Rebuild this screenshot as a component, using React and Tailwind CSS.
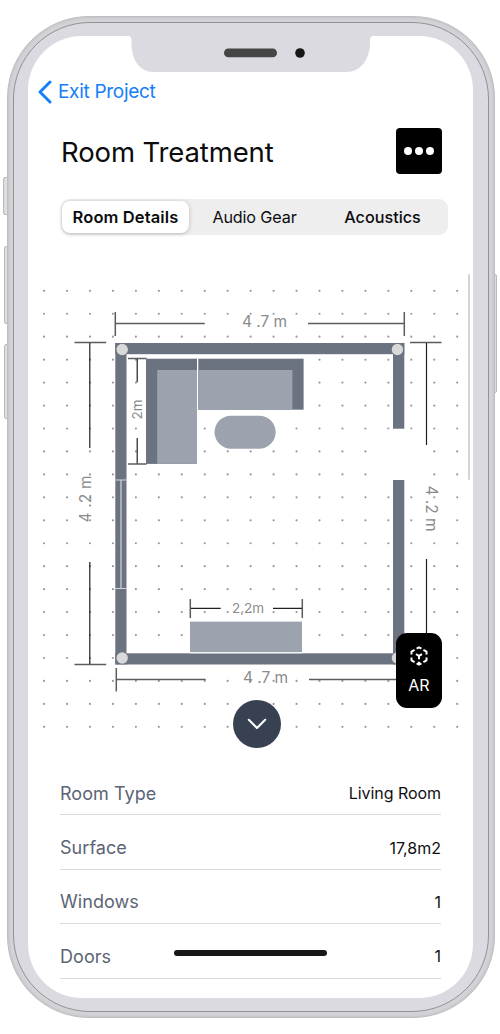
const columns = Array.from({ length: 19 }, (_, i) => 44.1 + i * 22.95);
const gridRows = Array.from({ length: 20 }, (_, i) => 290.8 + i * 22.95);

function FloorPlan() {
  return (
    <svg viewBox="28 280 445 460" className="block h-[460px] w-[445px]" aria-label="Floor plan">
      <g fill="#989a9e">
        {gridRows.map((y) =>
          columns.map((x) => <circle key={`${x}-${y}`} cx={x} cy={y} r="1.100" />)
        )}
      </g>
      <rect x="386" y="429.5" width="30" height="50" fill="#fff" />
      <path d="M127.5 354H393v4.500H127.500z" fill="#fff" />

      <g fill="#6b7280">
        <rect x="115.300" y="343" width="289" height="11.200" />
        <rect x="115.300" y="343" width="11.200" height="321.400" />
        <rect x="393" y="343" width="11.300" height="85.700" />
        <rect x="393" y="480" width="11.300" height="184.400" />
        <rect x="115.300" y="653.300" width="289" height="11.200" />
      </g>
      <path d="M115.300 480h11.400M115.300 588.500h11.400M121 480v108.500" stroke="#d1d5db" strokeWidth="1.200" fill="none" />
      <g fill="#d9d9d9">
        <circle cx="122.200" cy="349.500" r="5.700" />
        <circle cx="397.400" cy="349.500" r="5.700" />
        <circle cx="122.200" cy="658" r="5.700" />
        <circle cx="397.400" cy="658" r="5.700" />
      </g>

      <rect x="145" y="357.700" width="160" height="52.500" fill="#fff" />
      <rect x="146" y="358.700" width="51" height="105.200" fill="#6b7280" />
      <rect x="157.200" y="370" width="39.800" height="93.900" fill="#9ca3af" />
      <rect x="198.300" y="358.700" width="105.300" height="51" fill="#6b7280" />
      <rect x="198.300" y="370" width="94.100" height="39.700" fill="#9ca3af" />
      <rect x="214.500" y="415.700" width="61.200" height="33" rx="16.500" fill="#9ca3af" />
      <rect x="190" y="621.600" width="112" height="31.700" fill="#fff" />
      <rect x="190" y="621.600" width="112" height="30.500" fill="#9ca3af" />

      <g fill="none" stroke="#5c5c5c" strokeWidth="1.500">
        <path d="M115.300 312v24M115.300 323.500h89.500M308 323.500h96.300M404.300 312v24" />
        <path d="M74.500 342.600h31.700M74.500 664.500h31.700M410 342.600h31.500" />
        <path d="M116.300 668v23.500M116.300 679.500h89.400M309 679.500h95" />
        <path d="M128 358.400h18.500M128 464h18.500" />
        <path d="M190.300 599v19M302.300 599v19" />
      </g>
      <g fill="none" stroke="#202020" strokeWidth="1.200">
        <path d="M89.800 343v105M89.800 562v102M426.500 343v102M426.500 559v90" />
        <path d="M137.200 359v23.300M137.200 438v25.500" />
        <path d="M191 608.300h29.700M273 608.300h29" />
      </g>

      <g fill="#8b8b8b" fontFamily="Inter, sans-serif" fontSize="15.500" fontWeight="400">
        <text x="242" y="327" textLength="45" lengthAdjust="spacing">4 .7 m</text>
        <text x="243" y="682.700" textLength="45" lengthAdjust="spacing">4 .7 m</text>
        <text transform="translate(90.500 522.500) rotate(-90)" textLength="47" lengthAdjust="spacing">4 .2 m</text>
        <text transform="translate(426 485.500) rotate(90)" textLength="46" lengthAdjust="spacing">4 .2 m</text>
        <text transform="translate(141.500 419.500) rotate(-90)" fontSize="13.500" textLength="20" lengthAdjust="spacing">2m</text>
        <text x="232" y="612.600" fontSize="13.500" textLength="32" lengthAdjust="spacing">2,2m</text>
      </g>
    </svg>
  );
}

function ArIcon() {
  return (
    <svg viewBox="0 0 20 20" className="h-5 w-5" fill="none" stroke="#fff" strokeWidth="2" strokeLinejoin="round">
      <path d="M7.600 2.700 10 1.400l2.400 1.300M14.400 3.900l3.100 1.800v2.700M17.500 11.600v2.750l-3.100 1.800M12.400 17.300 10 18.600l-2.400-1.300M5.600 16.100l-3.100-1.800V11.600M2.500 8.400v-2.700l3.100-1.800" />
      <path d="M7 8.200 10 9.900l3-1.700M10 9.900v3.400M10 18.500v-2.700" />
    </svg>
  );
}

const details = [
  ["Room Type", "Living Room", "tracking-[-0.050px]"],
  ["Surface", "17,8m2", "tracking-normal"],
  ["Windows", "1", "tracking-normal"],
  ["Doors", "1", "tracking-normal"],
];

function Screen() {
  return (
    <main className="relative flex h-[962px] w-[445px] flex-col overflow-hidden rounded-[54px] bg-white">
      <a className="mt-[44px] ml-[10px] flex h-6 items-center gap-[6px] text-[19px] leading-6 tracking-[-0.300px] text-[#147efb]">
        <svg viewBox="0 0 14 24" className="h-6 w-[14px]" fill="none" stroke="currentColor" strokeWidth="2.900" strokeLinecap="round" strokeLinejoin="round">
          <path d="M12 2 2 12l10 10" />
        </svg>
        <span>Exit Project</span>
      </a>

      <header className="mt-[24px] mr-[31px] ml-[33px] flex h-[46px] items-center justify-between">
        <h1 className="pt-px text-[27.500px] leading-9 font-normal tracking-[-0.120px] text-[#0c0c0e]">Room Treatment</h1>
        <button className="flex h-[46px] w-[46px] items-center justify-center gap-[3px] rounded-[4px] bg-black">
          <i className="h-2 w-2 rounded-full bg-white" />
          <i className="h-2 w-2 rounded-full bg-white" />
          <i className="h-2 w-2 rounded-full bg-white" />
        </button>
      </header>

      <nav className="mt-[25px] ml-[33px] grid h-9 w-[387px] grid-cols-[127px_1fr_130px] items-center rounded-[9px] bg-[#eeeeee] px-px text-[16.200px] text-[#0c0c0e]">
        <button className="h-8 rounded-[8px] bg-white text-[16.500px] font-semibold tracking-[0.120px] shadow-[0_1px_4px_rgba(0,0,0,0.220)]">Room Details</button>
        <button className="h-8 pl-[3px] font-normal tracking-[-0.150px]">Audio Gear</button>
        <button className="h-8 pl-px font-medium">Acoustics</button>
      </nav>

      <section className="relative mt-[45px] h-[460px]">
        <FloorPlan />
        <button className="absolute top-[353px] left-[368px] flex h-[75px] w-[46px] flex-col items-center rounded-[11px] bg-black pt-[13px] text-white">
          <ArIcon />
          <span className="mt-[9px] text-[16px] leading-5">AR</span>
        </button>
        <button className="absolute top-[419.500px] left-[204.500px] flex h-12 w-12 items-center justify-center rounded-full bg-[#374151]">
          <svg viewBox="0 0 20 12" className="h-3 w-5" fill="none" stroke="#fff" strokeWidth="2.100" strokeLinecap="round" strokeLinejoin="round">
            <path d="m1.800 1.800 8.200 8.200L18.200 1.800" />
          </svg>
        </button>
        <div className="absolute top-[-6px] left-[440px] h-[206px] w-[2px] rounded-full bg-[#d1d5db]" />
      </section>

      <dl className="mt-[21px] mr-8 ml-8">
        {details.map(([label, value, tracking]) => (
          <div key={label} className="flex h-[54.400px] items-center justify-between border-b border-[#d9dadf] pt-[11px]">
            <dt className="text-[18px] tracking-[0.050px] text-[#5b6474]">{label}</dt>
            <dd className={`text-[16px] text-[#101012] ${tracking}`}>{value}</dd>
          </div>
        ))}
      </dl>
      <div className="absolute top-[914px] left-[146px] h-[6px] w-[153px] rounded-full bg-[#181818]" />
    </main>
  );
}

export default function App() {
  return (
    <div className="relative h-[1034px] w-[500px] overflow-hidden bg-white pt-4 pl-[7px] font-[Inter,sans-serif]">
      <div className="absolute top-[177px] left-[3px] h-[38px] w-[5px] rounded-l-[2px] border border-[#b9b9bd] bg-[#dedee2]" />
      <div className="absolute top-[246px] left-[4px] h-[78px] w-[4px] rounded-l-[2px] border border-[#b9b9bd] bg-[#dedee2]" />
      <div className="absolute top-[344px] left-[4px] h-[75px] w-[4px] rounded-l-[2px] border border-[#b9b9bd] bg-[#dedee2]" />
      <div className="absolute top-[274px] left-[493px] h-[119px] w-[4px] rounded-r-[2px] border border-[#b9b9bd] bg-[#dedee2]" />
      <div className="relative h-[1002px] w-[488px] rounded-[82px] border border-[#bfbfc3] bg-[#d3d3d7] p-[5px] shadow-[inset_0_0_2px_1px_#c3c3c8]">
        <div className="h-[990px] w-[476px] rounded-[77px] border border-[#929296] bg-[#dadae0] px-[14px] pt-[13px]">
          <Screen />
        </div>
      </div>
      <svg viewBox="0 0 250 37" className="absolute top-[35px] left-[125px] h-[37px] w-[250px]">
        <path d="M0 0h250v1.100h-1.500q-3.500 0-3.500 4c0 3 .2 6-.5 9C242 29 233 37 222 37H29C17 37 9 29 7 15c-.7-5-.5-8-.5-10q0-3.900-3.500-3.900H0z" fill="#dadae0" />
        <rect x="99" y="13.600" width="53" height="8.600" rx="4.300" fill="#454545" />
        <circle cx="175" cy="18" r="4.800" fill="#171717" />
      </svg>
    </div>
  );
}
